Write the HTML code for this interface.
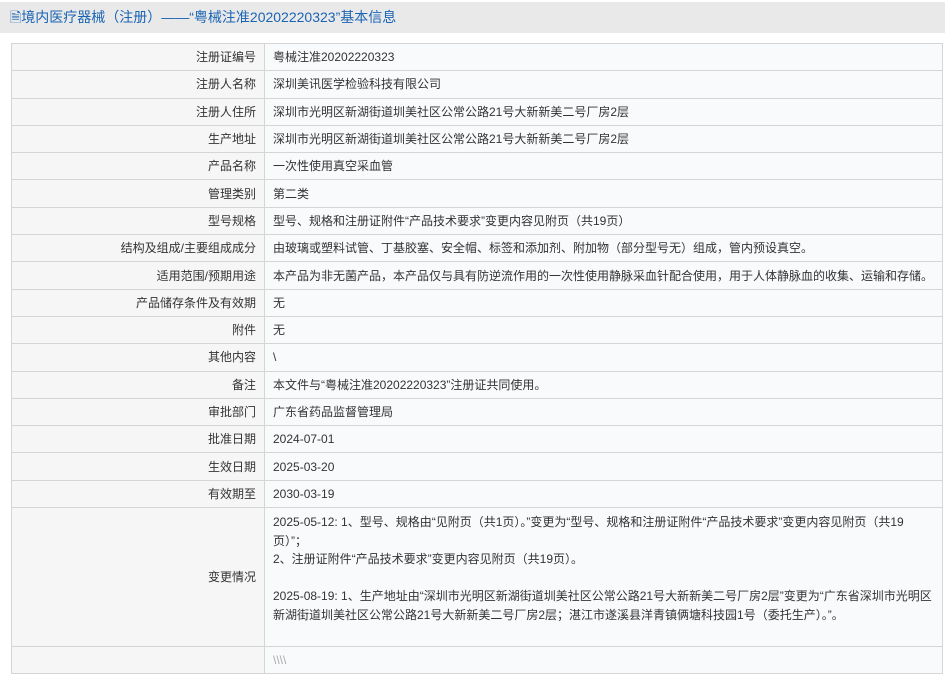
<!DOCTYPE html>
<html><head><meta charset="utf-8"><style>
body{margin:0;width:945px;height:656px;overflow:hidden;background:#fff;font-family:"Liberation Sans","Noto Sans CJK SC",sans-serif;font-size:12px;color:#333}
.hd{position:absolute;left:0;top:2px;width:945px;height:31px;background:#e9e9e9;color:#1a64b4;font-size:14px;line-height:31px}
.hd span{margin-left:10px}
table{position:absolute;left:11px;top:43px;width:932px;border-collapse:collapse}
td{border:1px solid #d5d5d5;height:27.3px;padding:0 8px;line-height:20px;background:#f9fafc;box-sizing:border-box}
td.l{width:253px;text-align:right;background:#f6f6f6}
td.v{vertical-align:top;line-height:18.5px;padding-top:5px}
</style></head><body>
<div class="hd"><span>🗎境内医疗器械（注册）——“粤械注准20202220323”基本信息</span></div>
<table>
<tr><td class="l">注册证编号</td><td>粤械注准20202220323</td></tr>
<tr><td class="l">注册人名称</td><td>深圳美讯医学检验科技有限公司</td></tr>
<tr><td class="l">注册人住所</td><td>深圳市光明区新湖街道圳美社区公常公路21号大新新美二号厂房2层</td></tr>
<tr><td class="l">生产地址</td><td>深圳市光明区新湖街道圳美社区公常公路21号大新新美二号厂房2层</td></tr>
<tr><td class="l">产品名称</td><td>一次性使用真空采血管</td></tr>
<tr><td class="l">管理类别</td><td>第二类</td></tr>
<tr><td class="l">型号规格</td><td>型号、规格和注册证附件“产品技术要求”变更内容见附页（共19页）</td></tr>
<tr><td class="l">结构及组成/主要组成成分</td><td>由玻璃或塑料试管、丁基胶塞、安全帽、标签和添加剂、附加物（部分型号无）组成，管内预设真空。</td></tr>
<tr><td class="l">适用范围/预期用途</td><td>本产品为非无菌产品，本产品仅与具有防逆流作用的一次性使用静脉采血针配合使用，用于人体静脉血的收集、运输和存储。</td></tr>
<tr><td class="l">产品储存条件及有效期</td><td>无</td></tr>
<tr><td class="l">附件</td><td>无</td></tr>
<tr><td class="l">其他内容</td><td>\</td></tr>
<tr><td class="l">备注</td><td>本文件与“粤械注准20202220323”注册证共同使用。</td></tr>
<tr><td class="l">审批部门</td><td>广东省药品监督管理局</td></tr>
<tr><td class="l">批准日期</td><td>2024-07-01</td></tr>
<tr><td class="l">生效日期</td><td>2025-03-20</td></tr>
<tr><td class="l">有效期至</td><td>2030-03-19</td></tr>
<tr><td class="l" style="height:139px">变更情况</td><td class="v" style="height:139px">2025-05-12: 1、型号、规格由“见附页（共1页）。”变更为“型号、规格和注册证附件“产品技术要求”变更内容见附页（共19页）”；<br>2、注册证附件“产品技术要求”变更内容见附页（共19页）。<br><br>2025-08-19: 1、生产地址由“深圳市光明区新湖街道圳美社区公常公路21号大新新美二号厂房2层”变更为“广东省深圳市光明区新湖街道圳美社区公常公路21号大新新美二号厂房2层；湛江市遂溪县洋青镇俩塘科技园1号（委托生产）。”。</td></tr>
<tr><td class="l"></td><td style="color:#aaa">\\\\</td></tr>
</table>
</body></html>
